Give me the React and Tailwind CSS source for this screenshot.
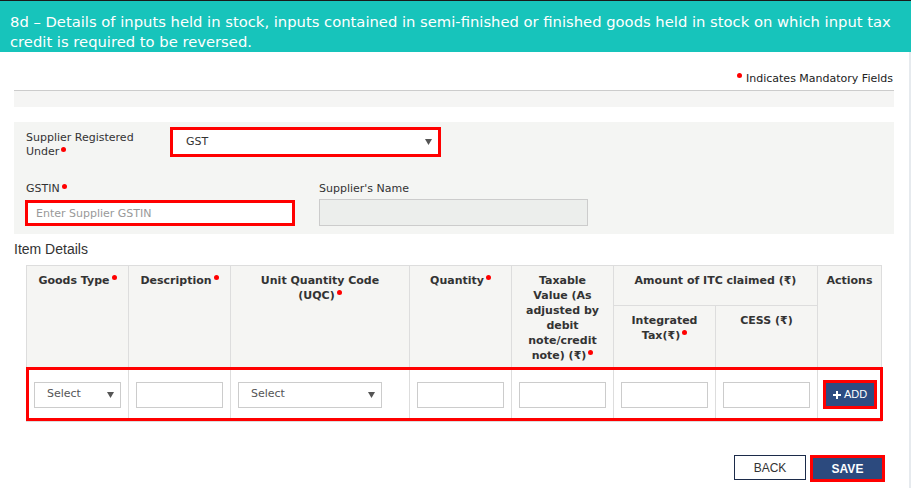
import { Fragment } from "react";

const Req = () => (
  <span className="inline-block w-[5px] h-[5px] rounded-full bg-[#ff0000] ml-[2px] align-top mt-[2px]" />
);

const Arrow = () => (
  <svg width="7" height="6" viewBox="0 0 7 6" className="shrink-0">
    <path d="M0 0 H7 L3.5 6 Z" fill="#555" />
  </svg>
);

const SelectBox = ({ label, className = "" }) => (
  <div
    className={`h-[26px] border border-[#ccc] bg-white flex items-center justify-between pl-[12px] pr-[6px] text-[11px] text-[#555] ${className}`}
  >
    <span>{label}</span>
    <Arrow />
  </div>
);

const Box = () => <div className="h-[26px] w-full border border-[#ccc] bg-white" />;

const th =
  "border border-[#ddd] align-top text-center font-bold text-[11px] leading-[15px] pt-[7px] px-[4px] text-[#333]";
const td = "border border-[#ddd] align-middle px-[7px]";

export default function App() {
  return (
    <div className="w-[911px] h-[488px] overflow-hidden bg-white font-['DejaVu_Sans',Verdana,sans-serif] text-[#333]">
      <div className="border-t border-[#1a1a1a] bg-[#17c4bb] pl-[10px] pr-[20px] pt-[11px] pb-0 text-[14.75px] leading-[20px] text-white">
        8d – Details of inputs held in stock, inputs contained in semi-finished or finished goods held in stock on which input tax credit is required to be reversed.
      </div>

      <div className="flex h-full">
        <div className="flex-1 pl-[14px] pr-[15px]">
          <div className="pt-[20px] pb-[4px] pr-[1px] text-right text-[11px] leading-[14px] text-[#222]">
            <span className="inline-block w-[5px] h-[5px] rounded-full bg-[#ff0000] mr-[4px] align-top mt-[1px]" />
            Indicates Mandatory Fields
          </div>
          <div className="border-t border-[#ccc] h-[17px] bg-[#f5f5f4]" />

          <div className="mt-[15px] h-[112px] bg-[#f4f5f3] pl-[12px] pt-[5px] pb-[8px]">
            <div className="flex">
              <div className="w-[144px] pt-[4px] text-[11px] leading-[14px]">
                Supplier Registered
                <br />
                Under
                <Req />
              </div>
              <div className="w-[271px] h-[30px] border-[3px] border-[#ff0000] bg-white flex items-center justify-between pl-[13px] pr-[6px] text-[11px] text-[#333]">
                <span>GST</span>
                <Arrow />
              </div>
            </div>

            <div className="flex mt-[23px]">
              <div className="w-[270px] -ml-[1px]">
                <div className="pl-[1px] text-[11px] leading-[14px]">
                  GSTIN
                  <Req />
                </div>
                <input
                  readOnly
                  placeholder="Enter Supplier GSTIN"
                  className="mt-[4px] block w-[270px] h-[26px] border-[3px] border-[#ff0000] bg-white pl-[8px] text-[11px] outline-none placeholder:text-[#999]"
                />
              </div>
              <div className="ml-[24px] w-[269px]">
                <div className="text-[11px] leading-[14px]">Supplier's Name</div>
                <div className="mt-[3px] h-[27px] border border-[#ccc] bg-[#eceeec]" />
              </div>
            </div>
          </div>

          <div className="mt-[6px] text-[14px] leading-[18px] font-['Liberation_Sans',Arial,sans-serif] text-[#333]">
            Item Details
          </div>

          <div className="relative mt-[7px] ml-[12px] w-[857px]">
            <table className="table-fixed border-collapse w-[855px]">
              <colgroup>
                <col className="w-[102px]" />
                <col className="w-[102px]" />
                <col className="w-[179px]" />
                <col className="w-[102px]" />
                <col className="w-[102px]" />
                <col className="w-[102px]" />
                <col className="w-[102px]" />
                <col className="w-[64px]" />
              </colgroup>
              <thead className="bg-[#f5f5f3]">
                <tr className="h-[40px]">
                  <th rowSpan={2} className={th}>
                    Goods Type
                    <Req />
                  </th>
                  <th rowSpan={2} className={th}>
                    Description
                    <Req />
                  </th>
                  <th rowSpan={2} className={th}>
                    Unit Quantity Code
                    <br />
                    (UQC)
                    <Req />
                  </th>
                  <th rowSpan={2} className={th}>
                    Quantity
                    <Req />
                  </th>
                  <th rowSpan={2} className={th}>
                    {["Taxable", "Value (As", "adjusted by", "debit", "note/credit"].map((l) => (
                      <Fragment key={l}>
                        {l}
                        <br />
                      </Fragment>
                    ))}
                    note) (₹)
                    <Req />
                  </th>
                  <th colSpan={2} className={th}>
                    Amount of ITC claimed (₹)
                  </th>
                  <th rowSpan={2} className={th}>
                    Actions
                  </th>
                </tr>
                <tr className="h-[62px]">
                  <th className={th}>
                    Integrated
                    <br />
                    Tax(₹)
                    <Req />
                  </th>
                  <th className={th}>CESS (₹)</th>
                </tr>
              </thead>
              <tbody>
                <tr className="h-[54px]">
                  <td className={td}>
                    <SelectBox label="Select" />
                  </td>
                  <td className={td}>
                    <Box />
                  </td>
                  <td className={td}>
                    <SelectBox label="Select" className="w-[144px]" />
                  </td>
                  <td className={td}>
                    <Box />
                  </td>
                  <td className={td}>
                    <Box />
                  </td>
                  <td className={td}>
                    <Box />
                  </td>
                  <td className={td}>
                    <Box />
                  </td>
                  <td className="border border-[#ddd] align-middle px-[5px]">
                    <button className="w-[54px] h-[29px] border-[3px] border-[#ff0000] bg-[#2d4c82] flex items-center justify-center gap-[3px] text-white text-[11px] font-['Liberation_Sans',Arial,sans-serif]">
                      <svg width="8" height="8" viewBox="0 0 8 8">
                        <path d="M3 0H5V3H8V5H5V8H3V5H0V3H3Z" fill="#fff" />
                      </svg>
                      ADD
                    </button>
                  </td>
                </tr>
              </tbody>
            </table>
            <div className="absolute left-0 top-[102px] w-[857px] h-[54px] border-[3px] border-[#ff0000] pointer-events-none" />
          </div>

          <div className="mt-[33px] flex justify-end items-start gap-[4px] pr-[9px] font-['Liberation_Sans',Arial,sans-serif]">
            <button className="w-[72px] h-[25px] border border-[#1c2b4a] bg-white text-[12px] text-[#333]">
              BACK
            </button>
            <button className="w-[75px] h-[27px] border-[3px] border-[#ff0000] bg-[#2c4a7e] text-[12px] font-bold text-white">
              SAVE
            </button>
          </div>
        </div>
        <div className="w-[2px] bg-[#e6eaee]" />
      </div>
    </div>
  );
}
